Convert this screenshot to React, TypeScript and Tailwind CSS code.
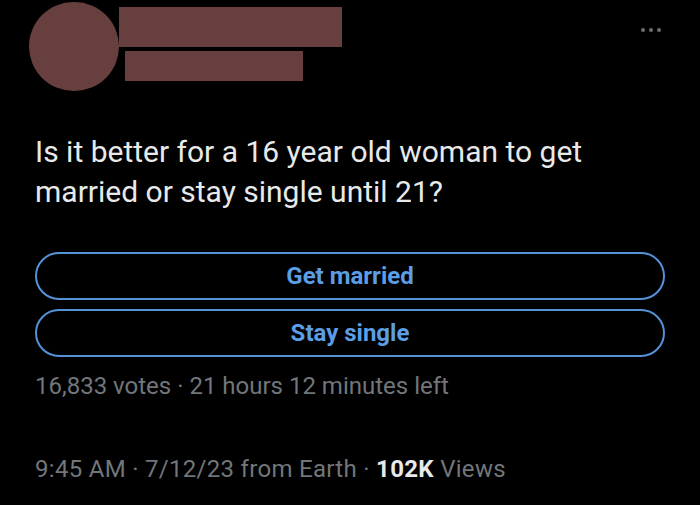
export default function App() {
  return (
    <div className="w-[700px] h-[505px] bg-black overflow-hidden relative" style={{ fontFamily: 'Roboto, "Liberation Sans", sans-serif' }}>
      <div className="flex items-start h-[100px]">
        <div className="ml-[29px] mt-[2px] w-[90px] h-[89px] rounded-full bg-[#673f3e] shrink-0" />
        <div className="flex flex-col">
          <div className="mt-[7px] w-[223px] h-[40px] bg-[#673f3e]" />
          <div className="mt-[4px] ml-[6px] w-[178px] h-[30px] bg-[#673f3e]" />
        </div>
        <div className="ml-auto mr-[39px] mt-[28px] flex gap-[4px]">
          <span className="w-[4px] h-[4px] rounded-full bg-[#6e6e6e]" />
          <span className="w-[4px] h-[4px] rounded-full bg-[#6e6e6e]" />
          <span className="w-[4px] h-[4px] rounded-full bg-[#6e6e6e]" />
        </div>
      </div>
      <div className="px-[35px]">
        <p className="mt-[32px] text-[30px] leading-[40px] text-[#e7e9ea]">
          Is it better for a 16 year old woman to get<br />married or stay single until 21?
        </p>
        <div className="mt-[40px] flex flex-col gap-[9px] w-[630px]">
          <div className="h-[48px] rounded-full border-2 border-[#5592d8] flex items-center justify-center text-[24px] font-bold text-[#5b9ee6]">Get married</div>
          <div className="h-[48px] rounded-full border-2 border-[#5592d8] flex items-center justify-center text-[24px] font-bold text-[#5b9ee6]">Stay single</div>
        </div>
        <p className="mt-[15px] text-[24px] leading-[28px] text-[#71767b]">16,833 votes · 21 hours 12 minutes left</p>
        <p className="mt-[55px] text-[24px] leading-[28px] text-[#71767b] tracking-[0.3px]">
          9:45 AM · 7/12/23 from Earth · <span className="font-bold text-[#e7e9ea]">102K</span> Views
        </p>
      </div>
    </div>
  );
}
